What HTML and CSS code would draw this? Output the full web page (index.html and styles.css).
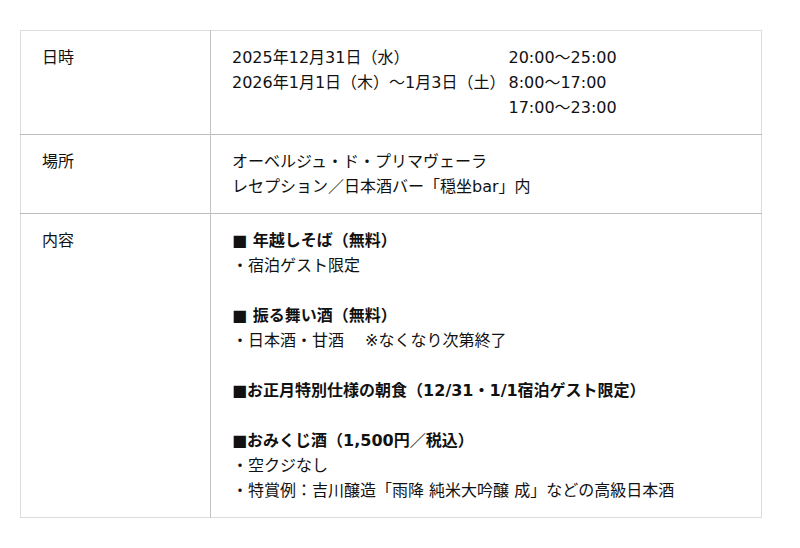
FILE: index.html
```html
<!DOCTYPE html>
<html lang="ja">
<head>
<meta charset="utf-8">
<link rel="stylesheet" href="styles.css">
</head>
<body>
<table class="info">
  <tr>
    <th>日時</th>
    <td>
      <div class="times">
        <span>2025年12月31日（水）</span><span>20:00～25:00</span>
        <span>2026年1月1日（木）～1月3日（土）</span><span>8:00～17:00</span>
        <span></span><span>17:00～23:00</span>
      </div>
    </td>
  </tr>
  <tr>
    <th>場所</th>
    <td>オーベルジュ・ド・プリマヴェーラ<br>レセプション／日本酒バー「穏坐bar」内</td>
  </tr>
  <tr>
    <th>内容</th>
    <td>
      <p class="h">■ 年越しそば（無料）</p>
      <p>・宿泊ゲスト限定</p>
      <p class="gap"></p>
      <p class="h">■ 振る舞い酒（無料）</p>
      <p>・日本酒・甘酒　 ※なくなり次第終了</p>
      <p class="gap"></p>
      <p class="h">■お正月特別仕様の朝食（12/31・1/1宿泊ゲスト限定）</p>
      <p class="gap"></p>
      <p class="h">■おみくじ酒（1,500円／税込）</p>
      <p>・空クジなし</p>
      <p>・特賞例：吉川醸造「雨降 純米大吟醸 成」などの高級日本酒</p>
    </td>
  </tr>
</table>
</body>
</html>
```
FILE: styles.css
```css
html, body {
  margin: 0;
  background: #fff;
}
body {
  padding: 30px 38px 30px 20px;
  font-family: "DejaVu Sans", "Noto Sans CJK JP", sans-serif;
  font-size: 16px;
  line-height: 25px;
  color: #111;
}
.info {
  width: 742px;
  border-collapse: collapse;
  border: 1px solid #dcdcdc;
}
.info tr + tr th,
.info tr + tr td {
  border-top: 1px solid #bdbdbd;
}
.info th,
.info td {
  text-align: left;
  vertical-align: top;
  padding: 14px 20px 14px 21px;
}
.info th {
  width: 148px;
  font-weight: normal;
  border-right: 1px solid #c4c4c4;
}
.times {
  display: grid;
  grid-template-columns: auto auto;
  justify-content: start;
  column-gap: 3px;
}
.info p {
  margin: 0;
}
.info p.gap {
  height: 25px;
}
.info p.h {
  font-weight: bold;
}
```
